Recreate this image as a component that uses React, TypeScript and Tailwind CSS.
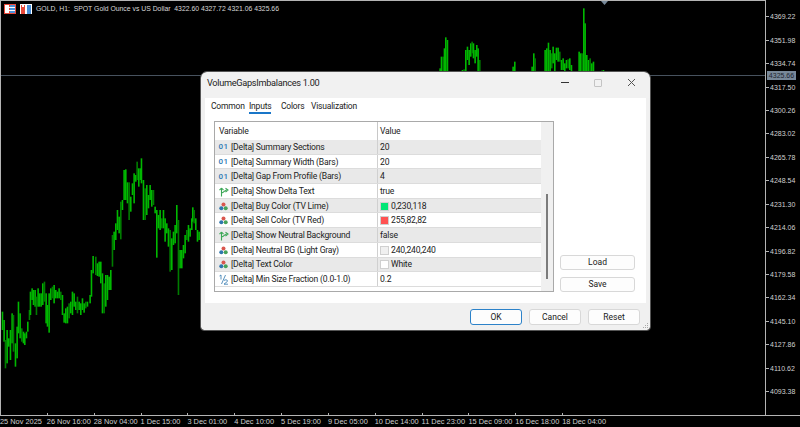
import React from 'react';

const uiFont = { fontFamily: 'Roboto, "Noto Sans", sans-serif' };

const prices = [
  '4369.22', '4351.98', '4334.74', '4317.50', '4300.26', '4283.02', '4265.78', '4248.54', '4231.30',
  '4214.06', '4196.82', '4179.58', '4162.34', '4145.10', '4127.86', '4110.62', '4093.38',
];

const times = [
  '25 Nov 2025', '26 Nov 16:00', '28 Nov 04:00', '1 Dec 15:00', '3 Dec 01:00', '4 Dec 10:00', '5 Dec 19:00',
  '9 Dec 05:00', '10 Dec 14:00', '11 Dec 23:00', '15 Dec 09:00', '16 Dec 18:00', '18 Dec 04:00',
];

// [x, top, bottom] measured on the 3x crops, left part of the chart
const leftBars = [
  [5, 485, 540], [10, 510, 575], [14, 570, 655], [19, 540, 640], [24, 565, 590], [29, 540, 630], [34, 490, 580],
  [38, 495, 605], [44, 580, 650], [49, 530, 625], [53, 455, 550], [58, 490, 565], [63, 535, 575], [68, 545, 580],
  [72, 550, 585], [77, 545, 565], [81, 515, 545], [86, 480, 510], [89, 425, 495], [94, 415, 450], [98, 420, 465],
  [103, 420, 470], [107, 440, 495], [112, 415, 470], [116, 430, 470], [121, 430, 470], [126, 400, 465], [131, 395, 455],
  [136, 430, 520], [140, 465, 530], [145, 430, 548], [150, 415, 450], [155, 410, 445], [160, 405, 460], [165, 420, 445],
  [170, 425, 445], [175, 415, 445], [180, 425, 450], [185, 435, 495], [190, 490, 518], [195, 475, 520], [200, 470, 520],
  [205, 460, 505], [210, 455, 490], [215, 425, 495], [220, 430, 470], [225, 455, 480], [230, 440, 490], [235, 455, 480],
  [240, 460, 495], [245, 445, 480], [250, 460, 488], [255, 455, 475], [260, 455, 470], [268, 435, 460], [272, 360, 440],
  [277, 318, 370], [285, 320, 375], [290, 340, 378], [295, 335, 380], [300, 335, 400], [305, 370, 490], [310, 400, 490],
  [315, 375, 470], [320, 375, 450], [325, 380, 420], [330, 360, 420], [335, 255, 350], [340, 245, 300], [345, 220, 270],
  [350, 180, 240], [355, 200, 250], [360, 155, 268], [365, 150, 180], [370, 60, 150], [375, 58, 150], [380, 97, 160],
  [385, 97, 210], [390, 140, 185], [395, 100, 135], [400, 70, 160], [405, 75, 95], [409, 35, 90], [414, 55, 110],
  [419, 55, 90], [422, 25, 100], [428, 90, 210], [433, 115, 210], [438, 105, 195], [443, 135, 175], [448, 105, 150],
  [453, 120, 170], [458, 120, 165], [463, 170, 190], [468, 180, 323], [473, 195, 235], [478, 180, 240], [483, 205, 235],
  [488, 180, 235], [493, 205, 275], [498, 220, 250], [503, 235, 290], [508, 240, 365], [513, 265, 360], [518, 245, 285],
  [523, 225, 280], [528, 165, 250], [533, 210, 435], [538, 300, 355], [543, 300, 355], [548, 285, 325], [553, 255, 310],
  [558, 240, 270], [563, 225, 275], [568, 235, 260], [573, 205, 240], [576, 172, 215], [580, 180, 220], [585, 205, 240],
  [590, 240, 275], [595, 245, 270], [600, 250, 290],
];

// same idea, the part sticking out above the dialog
const topBars = [
  [58, 205, 215], [62, 170, 215], [67, 170, 215], [71, 145, 215], [75, 112, 215], [80, 120, 215], [125, 210, 215],
  [130, 208, 215], [135, 150, 215], [140, 140, 180], [145, 150, 195], [150, 130, 170], [154, 125, 160], [158, 130, 175],
  [163, 150, 190], [168, 135, 170], [172, 145, 215], [177, 180, 215], [277, 200, 215], [282, 185, 215], [334, 200, 215],
  [339, 160, 215], [343, 175, 215], [373, 150, 215], [378, 145, 215], [383, 128, 215], [388, 150, 215], [393, 160, 205],
  [397, 140, 190], [402, 160, 215], [407, 143, 180], [412, 143, 185], [417, 155, 185], [422, 180, 210], [427, 175, 210],
  [432, 190, 215], [437, 180, 205], [442, 178, 205], [447, 175, 210], [452, 195, 215], [475, 155, 215], [480, 160, 215],
  [484, 160, 215], [489, 25, 215], [493, 70, 215], [498, 165, 215], [503, 180, 215], [508, 175, 215], [513, 190, 215],
  [518, 185, 215], [543, 212, 215], [548, 210, 215],
];

type Row = { icon: 'int' | 'bool' | 'color' | 'frac'; name: string; value: string; swatch?: string };

const rows: Row[] = [
  { icon: 'int', name: '[Delta] Summary Sections', value: '20' },
  { icon: 'int', name: '[Delta] Summary Width (Bars)', value: '20' },
  { icon: 'int', name: '[Delta] Gap From Profile (Bars)', value: '4' },
  { icon: 'bool', name: '[Delta] Show Delta Text', value: 'true' },
  { icon: 'color', name: '[Delta] Buy Color (TV Lime)', value: '0,230,118', swatch: 'bg-[#00e676]' },
  { icon: 'color', name: '[Delta] Sell Color (TV Red)', value: '255,82,82', swatch: 'bg-[#ff5252]' },
  { icon: 'bool', name: '[Delta] Show Neutral Background', value: 'false' },
  { icon: 'color', name: '[Delta] Neutral BG (Light Gray)', value: '240,240,240', swatch: 'bg-[#f0f0f0]' },
  { icon: 'color', name: '[Delta] Text Color', value: 'White', swatch: 'bg-white' },
  { icon: 'frac', name: '[Delta] Min Size Fraction (0.0-1.0)', value: '0.2' },
];

const RowIcon = ({ type }: { type: Row['icon'] }) => {
  if (type === 'int') {
    return <span className="text-[8px] leading-none font-medium tracking-[0.5px] text-[#2f7ab5]">01</span>;
  }
  if (type === 'bool') {
    return (
      <svg width="10" height="11" viewBox="0 0 10 11" fill="none" stroke="#3aa655" strokeWidth="1.1">
        <path d="M2.500 10.500V2M2.500 2L0.500 4.200M2.500 2L4.500 4.200M2.500 7C5 7 5.500 4 7.500 4M6.500 2.200L9 4L6.500 6" />
      </svg>
    );
  }
  if (type === 'color') {
    return (
      <svg width="9" height="9" viewBox="0 0 9 9">
        <circle cx="4.500" cy="2.500" r="2" fill="#d9574f" />
        <circle cx="2.300" cy="6.300" r="2" fill="#2f76ad" />
        <circle cx="6.700" cy="6.300" r="2" fill="#46a35a" />
      </svg>
    );
  }
  return (
    <svg width="9" height="11" viewBox="0 0 9 11" fill="none" stroke="#2f76ad" strokeWidth="0.8">
      <path d="M0.500 2L2 1V5.500M6.500 1L2.500 10M5 6.500C6 5.500 8.500 5.500 8.500 7C8.500 8 6 9 5 10.200H9" />
    </svg>
  );
};

const PushButton = ({ label, className }: { label: string; className: string }) => (
  <button className={`flex items-center justify-center rounded-[3px] border bg-[#fdfdfd] text-[8.5px] leading-none text-[#1a1a1a] ${className}`}>
    {label}
  </button>
);

const Dialog = () => (
  <div
    style={uiFont}
    className="absolute left-[200px] top-[71px] flex h-[258px] w-[449px] flex-col rounded-t-[6px] rounded-b-[3px] bg-[#f0f0f0] px-[4px] outline outline-1 outline-[#555]"
  >
    <div className="-mx-[4px] flex h-[26px] shrink-0 items-center justify-between rounded-t-[6px] bg-[#f1f1f1] pb-[5px] pl-[6px] pr-[14px]">
      <span className="text-[9.2px] tracking-[-0.3px] text-[#222]">VolumeGapsImbalances 1.00</span>
      <div className="flex items-center gap-[25px]">
        <div className="h-px w-[8px] bg-[#333]" />
        <div className="h-[8px] w-[8px] rounded-[1px] border border-[#c4c4c4]" />
        <svg width="9" height="9" viewBox="0 0 9 9" stroke="#555" strokeWidth="1" fill="none">
          <path d="M1 1L8 8M8 1L1 8" />
        </svg>
      </div>
    </div>

    <div className="flex h-[205px] shrink-0 flex-col bg-white">
      <div className="flex h-[23px] shrink-0 items-start pl-[6px] pt-[2px] text-[8.5px] tracking-[-0.2px] text-[#222]">
        <span className="w-[38px]">Common</span>
        <div className="w-[32px]">
          <span className="border-b-2 border-[#1976c8] pb-[1px]">Inputs</span>
        </div>
        <span className="w-[30px]">Colors</span>
        <span>Visualization</span>
      </div>

      <div className="flex gap-[6px] pl-[9px]">
        <div className="flex h-[171px] w-[340px] border border-[#a9a9a9]">
          <div className="flex w-[326px] flex-col">
            <div className="flex h-[18px] shrink-0 items-center text-[8.6px] tracking-[-0.2px] text-[#222]">
              <div className="w-[163px] border-r border-[#c8c8c8] pl-[4px] leading-[18px]">Variable</div>
              <div className="pl-[2px]">Value</div>
            </div>
            {rows.map((row, i) => (
              <div
                key={row.name}
                className={`flex h-[14.7px] shrink-0 items-center border-b border-[#dcdcdc] text-[8.6px] tracking-[-0.2px] text-[#222] ${
                  i % 2 === 0 ? 'bg-[#e9e9e9]' : 'bg-white'
                }`}
              >
                <div className="flex h-full w-[163px] shrink-0 items-center gap-[1px] border-r border-[#d0d0d0] pl-[2px] pt-[1px]">
                  <div className="flex w-[13px] shrink-0 justify-center">
                    <RowIcon type={row.icon} />
                  </div>
                  <span>{row.name}</span>
                </div>
                <div className="flex items-center gap-[2px] pl-[2px] pt-[1px]">
                  {row.swatch && <div className={`h-[9px] w-[9px] border border-[#d0d0d0] ${row.swatch}`} />}
                  <span>{row.value}</span>
                </div>
              </div>
            ))}
          </div>
          <div className="relative w-[12px] flex-1 bg-[#f0f0f0]">
            <div className="absolute left-[5px] top-[72px] h-[85px] w-[2px] bg-[#7c7c7c]" />
          </div>
        </div>

        <div className="flex h-[171px] flex-col justify-end gap-[7px]">
          <PushButton label="Load" className="h-[15px] w-[75px] border-[#d8d8d8]" />
          <PushButton label="Save" className="h-[15px] w-[75px] border-[#d8d8d8]" />
        </div>
      </div>
    </div>

    <div className="flex flex-1 items-start justify-end gap-[7px] pr-[6px] pt-[6px]">
      <PushButton label="OK" className="h-[16px] w-[52px] border-[#2c82c9]" />
      <PushButton label="Cancel" className="h-[16px] w-[52px] border-[#d8d8d8]" />
      <PushButton label="Reset" className="h-[16px] w-[52px] border-[#d8d8d8]" />
    </div>

    <svg className="absolute bottom-[1px] right-[1px]" width="6" height="6" viewBox="0 0 6 6" fill="#a8a8a8">
      <rect x="4" y="0" width="1" height="1" />
      <rect x="2" y="2" width="1" height="1" />
      <rect x="4" y="2" width="1" height="1" />
      <rect x="0" y="4" width="1" height="1" />
      <rect x="2" y="4" width="1" height="1" />
      <rect x="4" y="4" width="1" height="1" />
    </svg>
  </div>
);

export default function App() {
  return (
    <div
      style={{ fontFamily: '"Liberation Sans", sans-serif' }}
      className="relative flex h-[427px] w-[800px] flex-col overflow-hidden bg-black"
    >
      <div className="flex h-[415px] shrink-0">
        <div className="relative w-[766px] shrink-0 border-l border-r border-t border-[#b4b4b4]">
          <svg className="absolute -left-px -top-px" width="765" height="415">
            {leftBars.map(([x, top, bottom], i) => (
              <rect
                key={i}
                x={x / 3}
                y={150 + top / 3}
                width="1.6"
                height={(bottom - top) / 3}
                fill={i % 5 === 2 ? '#007c00' : '#00b800'}
              />
            ))}
            {topBars.map(([x, top, bottom], i) => (
              <rect
                key={i}
                x={420 + x / 3}
                y={top / 3}
                width="1.6"
                height={(bottom - top) / 3}
                fill={i % 5 === 2 ? '#007c00' : '#00b800'}
              />
            ))}
            <rect x="1" y="75" width="764" height="1" fill="#47525e" />
            <path d="M601 1H608L604.500 5Z" fill="#778899" />
          </svg>

          <div className="absolute left-[3px] top-[3px] flex items-center gap-[3px]">
            <svg width="12" height="10" viewBox="0 0 12 10">
              <rect width="12" height="10" fill="#e8493a" />
              <rect x="1" y="1" width="4" height="8" fill="#fff" />
              <rect x="6" y="1" width="5" height="8" fill="#4a90d9" />
              <path d="M1 3.500H11M1 6.500H11" stroke="#fff" strokeWidth="1" />
            </svg>
            <svg className="ml-[1px]" width="12" height="10" viewBox="0 0 12 10">
              <rect width="12" height="10" fill="#fff" />
              <rect x="1" y="1" width="4" height="9" fill="#e8493a" />
              <rect x="7" y="1" width="4" height="9" fill="#4a90d9" />
              <rect x="2" y="0" width="2" height="3" fill="#fff" />
            </svg>
            <span className="ml-[1px] whitespace-pre text-[6.85px] leading-none text-[#d8d8d8]">
              GOLD, H1:  SPOT Gold Ounce vs US Dollar  4322.60 4327.72 4321.06 4325.66
            </span>
          </div>

          <Dialog />
        </div>

        <div className="relative flex-1 pt-[5px]">
          {prices.map((p) => (
            <div key={p} className="flex h-[23.44px] items-center text-[7px] leading-none text-[#d0d0d0]">
              <div className="h-px w-[3px] bg-[#b4b4b4]" />
              <span className="pl-[1px]">{p}</span>
            </div>
          ))}
          <div className="absolute left-[1px] top-[71px] flex h-[9px] w-[29px] items-center justify-center bg-[#778899] text-[7px] leading-none text-[#1c2530]">
            4325.66
          </div>
        </div>
      </div>

      <div className="flex h-[12px] border-t border-[#b4b4b4]">
        {times.map((t, i) => (
          <div key={t} className="relative w-[46.85px] shrink-0 whitespace-nowrap pt-[1px] text-[7.4px] leading-[10px] text-[#d0d0d0]">
            <div className={`absolute -top-[3px] left-0 h-[3px] w-px bg-[#b4b4b4] ${i === 0 ? 'hidden' : ''}`} />
            {t}
          </div>
        ))}
      </div>
    </div>
  );
}
